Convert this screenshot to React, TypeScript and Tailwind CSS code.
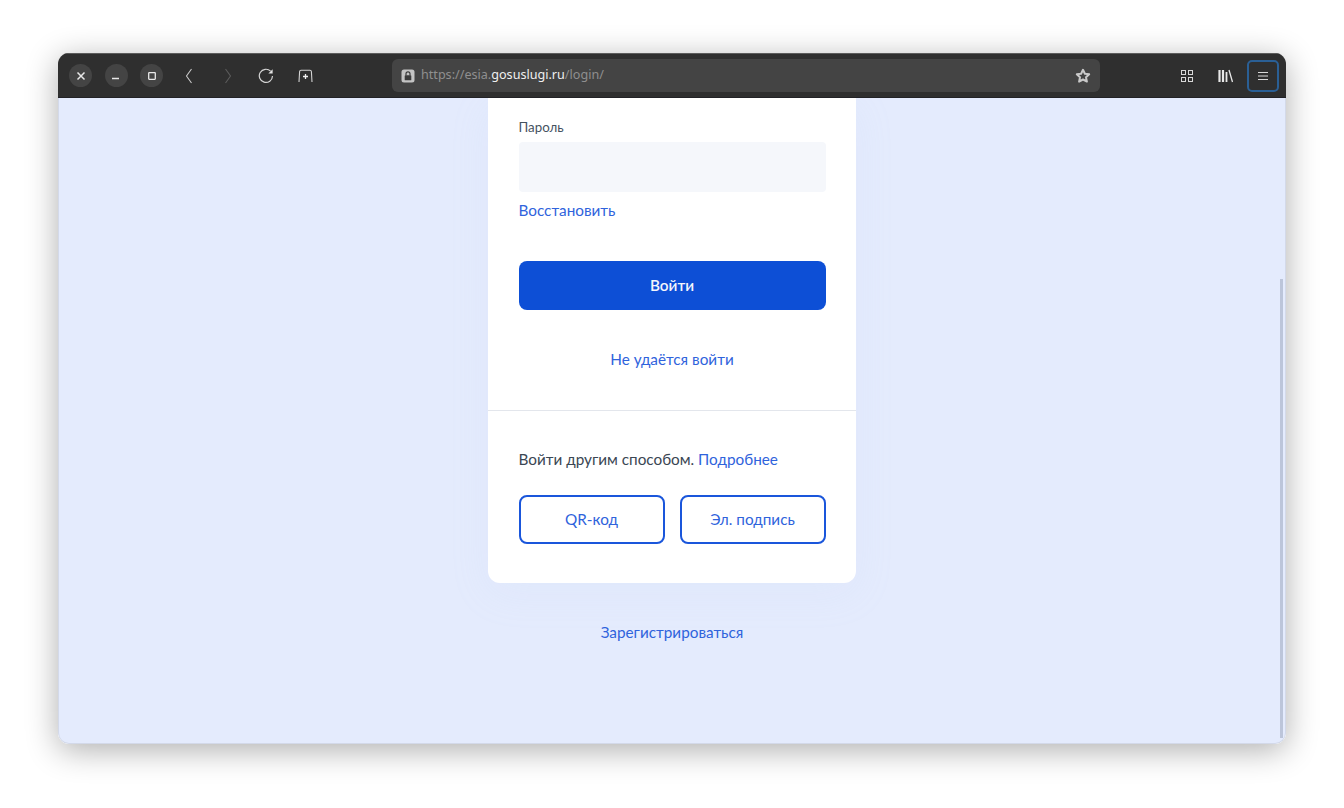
import React from "react";

function RoundBtn({ children }: { children: React.ReactNode }) {
  return (
    <div className="flex h-[23px] w-[23px] items-center justify-center rounded-full bg-[#444444]">{children}</div>
  );
}

export default function App() {
  return (
    <div className="h-[808px] w-[1344px] overflow-hidden bg-white pl-[58px] pt-[53px] font-['Lato',sans-serif]">
      <div className="flex h-[691px] w-[1228px] flex-col overflow-hidden rounded-[11px] shadow-[0_6px_32px_rgba(0,0,0,0.32)]">
        <div className="flex h-[45px] shrink-0 items-center border-b border-t border-b-[#222226] border-t-[#5c5c5c] bg-[#2f2f2f] pl-[11px] pr-[7px]">
          <div className="flex items-center gap-[12.5px]">
            <RoundBtn>
              <svg width="10" height="10" viewBox="0 0 10 10" stroke="#e8e8e8" strokeWidth="1.5" fill="none"><path d="M1.5 1.5l7 7M8.5 1.5l-7 7" /></svg>
            </RoundBtn>
            <RoundBtn>
              <svg width="10" height="10" viewBox="0 0 10 10" stroke="#e8e8e8" strokeWidth="1.3" fill="none"><path d="M1 7.5h7" /></svg>
            </RoundBtn>
            <RoundBtn>
              <svg width="10" height="10" viewBox="0 0 10 10" stroke="#e8e8e8" strokeWidth="1.3" fill="none"><rect x="1.7" y="1.7" width="6.6" height="6.6" rx="0.5" /></svg>
            </RoundBtn>
          </div>
          <svg className="ml-[21px]" width="10" height="16" viewBox="0 0 10 16" stroke="#c8c8c8" strokeWidth="1.1" fill="none"><path d="M7.5 1L2.5 8l5 7" /></svg>
          <svg className="ml-[29px]" width="10" height="16" viewBox="0 0 10 16" stroke="#5c5c5c" strokeWidth="1.1" fill="none"><path d="M2.5 1l5 7-5 7" /></svg>
          <svg className="ml-[25px]" width="16" height="16" viewBox="0 0 16 16" fill="none"><path d="M12.6 3.2A6.6 6.6 0 1 0 14.5 8" stroke="#d4d4d4" strokeWidth="1.2" /><path d="M14.6 1.2v4.2h-4.2z" fill="#e4e4e4" /></svg>
          <svg className="ml-[24px]" width="15" height="14" viewBox="0 0 15 14" fill="none"><path d="M1 13l.6-10.5C1.7 1.6 2.2 1.2 3 1.2h9c.8 0 1.3.4 1.4 1.3L14 13" stroke="#d4d4d4" strokeWidth="1.1" /><path d="M7.5 5v5M5 7.5h5" stroke="#f0f0f0" strokeWidth="1.3" /></svg>
          <div className="ml-[79px] flex h-[33px] w-[708px] items-center rounded-[6px] bg-[#444444] pl-[9px] pr-[9px] font-['Noto_Sans',sans-serif] text-[12.6px]">
            <svg width="14" height="14" viewBox="0 0 14 14"><rect x="0.5" y="0.5" width="13" height="13" rx="2.5" fill="#c4c4c4" /><rect x="3.7" y="6.3" width="6.6" height="5" rx="0.6" fill="#3c3c3c" /><path d="M5 6.5V4.8a2 2 0 0 1 4 0v1.7" stroke="#3c3c3c" strokeWidth="1.2" fill="none" /></svg>
            <span className="ml-[6px] text-[#8f8f8f]">https://esia.</span>
            <span className="text-[#f0f0f0]">gosuslugi.ru</span>
            <span className="text-[#8f8f8f]">/login/</span>
            <svg className="ml-auto" width="16" height="16" viewBox="0 0 16 16" fill="none" stroke="#c9c9c9" strokeWidth="2" strokeLinejoin="round"><path d="M8 1.8l1.9 4 4.3.5-3.2 3 .9 4.3L8 11.5l-3.9 2.1.9-4.3-3.2-3 4.3-.5z" /></svg>
          </div>
          <svg className="ml-[80px]" width="14" height="14" viewBox="0 0 14 14" fill="none" stroke="#d8d8d8" strokeWidth="1"><rect x="1.5" y="1.5" width="4" height="4" /><rect x="8.5" y="1.5" width="4" height="4" /><rect x="1.5" y="8.5" width="4" height="4" /><rect x="8.5" y="8.5" width="4" height="4" /></svg>
          <svg className="ml-[24px]" width="16" height="14" viewBox="0 0 16 14" fill="none"><path d="M1.5 1v12M5 1v12" stroke="#e8e8e8" strokeWidth="2.2" /><path d="M8.5 3v10" stroke="#e8e8e8" strokeWidth="1.8" /><path d="M11 1l3.5 12" stroke="#e8e8e8" strokeWidth="1.3" /></svg>
          <div className="ml-[13px] flex h-[32px] w-[32px] items-center justify-center rounded-[5px] border-2 border-[#2a5f95]">
            <svg width="12" height="12" viewBox="0 0 12 12" stroke="#d8d8d8" strokeWidth="1" fill="none"><path d="M1 2.5h10M1 6h10M1 9.5h10" /></svg>
          </div>
        </div>
        <div className="relative flex flex-1 flex-col items-center overflow-hidden rounded-b-[11px] border-x border-b border-[#d3d9e9] bg-[#e4ebfd]">
          <div className="flex w-[368px] flex-col rounded-b-[12px] bg-white shadow-[0_10px_40px_rgba(190,205,235,0.10)]">
            <div className="flex flex-col px-[30.5px] pt-[21px]">
              <div className="text-[13.3px] leading-[17px] text-[#45525f]">Пароль</div>
              <div className="mt-[6px] h-[50px] rounded-[4px] bg-[#f5f7fb]" />
              <div className="mt-[8px] text-[15.3px] leading-[20px] text-[#2f63dc]">Восстановить</div>
              <div className="mt-[41px] flex h-[49px] items-center justify-center rounded-[8px] bg-[#0d4fd6] text-[15.3px] font-semibold text-[#f4f6fc]">Войти</div>
              <div className="mt-[39px] text-center text-[15.3px] leading-[20px] text-[#2f63dc]">Не удаётся войти</div>
            </div>
            <div className="mt-[41px] border-t border-[#e3e6ec] px-[30.5px] pb-[39px] pt-[38px]">
              <div className="text-[15.3px] leading-[20px] text-[#3a4653]">
                Войти другим способом. <span className="text-[#2f63dc]">Подробнее</span>
              </div>
              <div className="mt-[26px] flex gap-[15px]">
                <div className="flex h-[49px] flex-1 items-center justify-center rounded-[8px] border-2 border-[#1a56db] text-[15.3px] text-[#2f63dc]">QR-код</div>
                <div className="flex h-[49px] flex-1 items-center justify-center rounded-[8px] border-2 border-[#1a56db] text-[15.3px] text-[#2f63dc]">Эл. подпись</div>
              </div>
            </div>
          </div>
          <div className="mt-[39px] text-[15.3px] leading-[20px] text-[#2f63dc]">Зарегистрироваться</div>
          <div className="absolute bottom-[5px] right-[2px] top-[181px] w-[3px] bg-[#bcc5da]" />
        </div>
      </div>
    </div>
  );
}
